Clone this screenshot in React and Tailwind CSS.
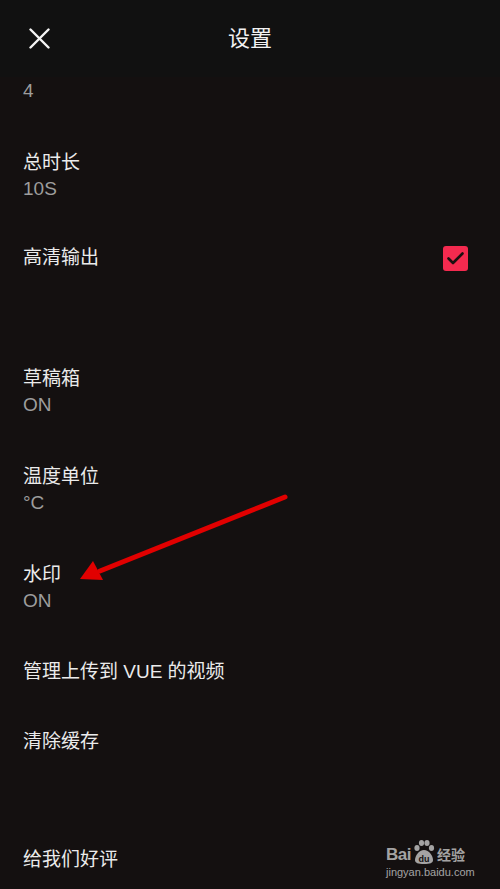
import React from "react";

const FONT = { fontFamily: '"Liberation Sans", "Noto Sans CJK SC", sans-serif' };

function Label({ children }) {
  return <div className="h-[29px] text-[19px] pt-[6px] leading-[23px] text-[#ebebeb] whitespace-nowrap">{children}</div>;
}
function Value({ children }) {
  return <div className="h-[29px] text-[19px] leading-[29px] text-[#9d9d9d]">{children}</div>;
}

export default function App() {
  return (
    <div className="relative w-[500px] h-[889px] overflow-hidden bg-[#141010]" style={FONT}>
      <div className="h-[77px] bg-[#111111] flex items-center relative">
        <div className="pl-[29px] flex items-center">
          <svg width="21" height="21" viewBox="0 0 21 21">
            <path d="M1.5 1.5 L19.5 19.5 M19.5 1.5 L1.5 19.5" stroke="#f5f5f5" strokeWidth="2.4" strokeLinecap="round" />
          </svg>
        </div>
        <div className="absolute left-0 right-0 text-center text-[22px] text-[#f2f2f2] pointer-events-none">设置</div>
      </div>

      <div className="flex flex-col pl-[23px] pr-[32px]">
        <div className="-mt-[1px]">
          <Value>4</Value>
        </div>
        <div className="mt-[40px]">
          <Label>总时长</Label>
          <Value>10S</Value>
        </div>
        <div className="mt-[37px] flex items-center justify-between h-[29px]">
          <Label>高清输出</Label>
          <div className="mt-[7px] w-[25px] h-[25px] rounded-[3px] bg-[#f42a4f] flex items-center justify-center">
            <svg width="17" height="13" viewBox="0 0 17 13">
              <path d="M1.5 6.5 L6 11 L15.5 1.5" stroke="#1a1010" strokeWidth="2.6" fill="none" strokeLinecap="round" strokeLinejoin="round" />
            </svg>
          </div>
        </div>
        <div className="mt-[92px]">
          <Label>草稿箱</Label>
          <Value>ON</Value>
        </div>
        <div className="mt-[40px]">
          <Label>温度单位</Label>
          <Value>°C</Value>
        </div>
        <div className="mt-[40px]">
          <Label>水印</Label>
          <Value>ON</Value>
        </div>
        <div className="mt-[39px]">
          <Label>管理上传到 VUE 的视频</Label>
        </div>
        <div className="mt-[41px]">
          <Label>清除缓存</Label>
        </div>
        <div className="mt-[89px]">
          <Label>给我们好评</Label>
        </div>
      </div>

      {/* red annotation arrow */}
      <svg className="absolute left-0 top-0 pointer-events-none" width="500" height="889">
        <line x1="285" y1="497" x2="100" y2="571" stroke="#e10000" strokeWidth="5" strokeLinecap="round" />
        <polygon points="80,579 93,561 103,580" fill="#e10000" />
      </svg>

      {/* watermark */}
      <div className="absolute left-[386px] top-[839px] flex flex-col items-start opacity-80">
        <div className="flex items-end h-[26px]">
          <span className="text-[17px] leading-[20px] font-bold text-[#c8c8c8] tracking-[-0.5px]">Bai</span>
          <svg width="24" height="26" viewBox="0 0 24 26" className="mx-[1px]">
            <ellipse cx="5" cy="9" rx="2.6" ry="3" fill="#c8c8c8" />
            <ellipse cx="9.5" cy="4" rx="2.6" ry="3" fill="#c8c8c8" />
            <ellipse cx="15" cy="4" rx="2.6" ry="3" fill="#c8c8c8" />
            <ellipse cx="19.5" cy="9" rx="2.6" ry="3" fill="#c8c8c8" />
            <path d="M12 11 C7 11 3 17 3 21 C3 24 6 25 12 25 C18 25 21 24 21 21 C21 17 17 11 12 11 Z" fill="#c8c8c8" />
            <text x="12" y="22.5" textAnchor="middle" fontSize="9" fontWeight="bold" fill="#141010" fontFamily="Liberation Sans, sans-serif">du</text>
          </svg>
          <span className="text-[14px] leading-[20px] font-bold text-[#c8c8c8]">经验</span>
        </div>
        <div className="text-[11px] leading-[13px] text-[#c8c8c8] mt-[1px]">jingyan.baidu.com</div>
      </div>
    </div>
  );
}
